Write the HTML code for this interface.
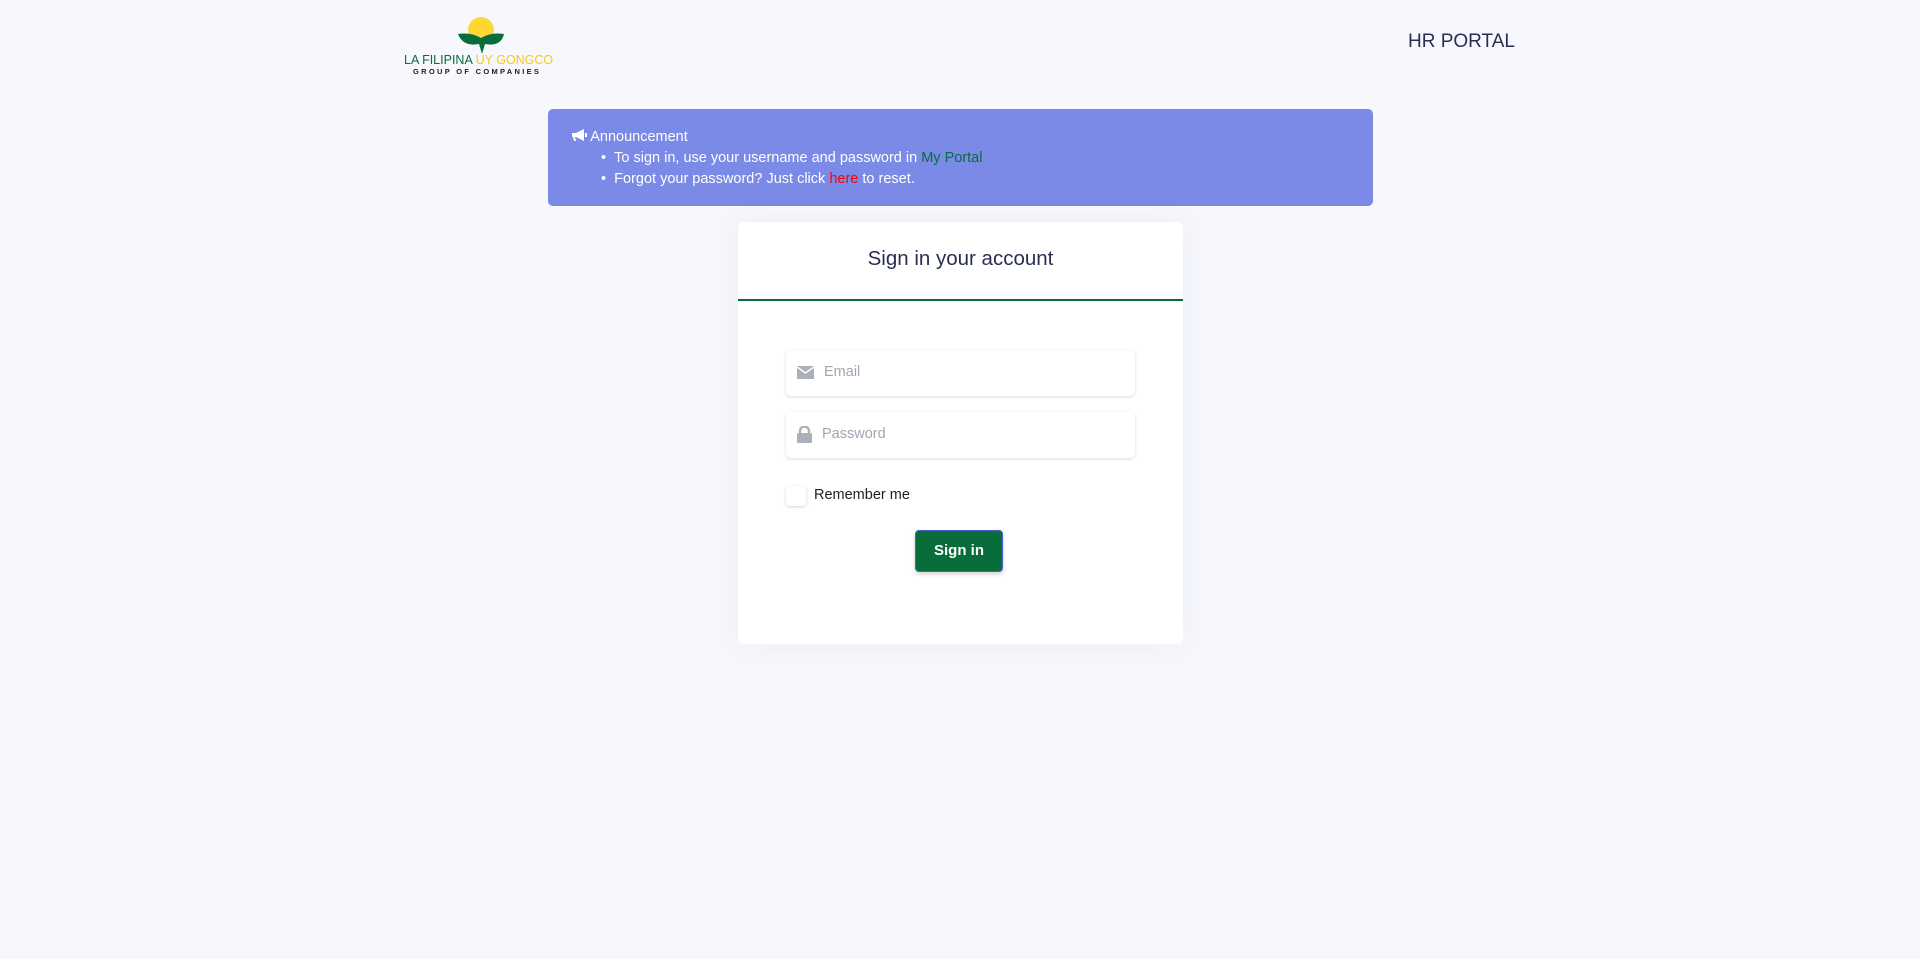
<!DOCTYPE html>
<html><head><meta charset="utf-8"><style>
*{box-sizing:border-box;margin:0;padding:0}
body{width:1920px;height:959px;background:#f7f8fd;font-family:"Liberation Sans",sans-serif;position:relative;overflow:hidden}
.abs{position:absolute}
</style></head><body>
<svg class="abs" style="left:455px;top:16px" width="55" height="40" viewBox="0 0 55 40">
<circle cx="26" cy="14" r="13" fill="#fdd835"/>
<path d="M3 18 Q16 16 26 22 Q36 16 49 18 Q46 31 30 28 L27 38 L24 28 Q8 31 3 18Z" fill="#086d3b"/>
</svg>
<div class="abs" style="left:404px;top:53px;font-size:12.5px;color:#086d3b;white-space:nowrap">LA FILIPINA <span style="color:#f6c915">UY GONGCO</span></div>
<div class="abs" style="left:413px;top:67px;font-size:7.5px;letter-spacing:2.3px;font-weight:bold;color:#222">GROUP OF COMPANIES</div>
<div class="abs" style="left:1408px;top:31px;font-size:19px;color:#2a2f52">HR PORTAL</div>
<div class="abs" style="left:548px;top:109px;width:825px;height:97px;background:#7a8ae6;border-radius:5px;color:#fff;font-size:14.5px;line-height:21px;padding:18px 0 0 24px">
<div><svg width="15" height="13" viewBox="0 0 15 13" style="vertical-align:-1px"><path d="M0 4 H4 L12 0 V12 L4 8 H3 L4 12 H2 L1 8 H0Z" fill="#fff"/><rect x="13" y="4" width="2" height="4" fill="#fff"/></svg> Announcement</div>
<div style="padding-left:29px">• &nbsp;To sign in, use your username and password in <b style="color:#086d3b;font-weight:normal">My Portal</b></div>
<div style="padding-left:29px">• &nbsp;Forgot your password? Just click <span style="color:#ff0000">here</span> to reset.</div>
</div>
<div class="abs" style="left:738px;top:222px;width:445px;height:422px;background:#fff;border-radius:5px;box-shadow:0 0 30px rgba(100,110,160,.08)">
<div style="height:79px;border-bottom:2px solid #086d3b;text-align:center;font-size:20.5px;color:#2a2f52;padding-top:25px">Sign in your account</div>
<div class="abs" style="left:48px;top:128px;width:349px;height:46px;border-radius:5px;box-shadow:0 1px 3px rgba(0,0,0,.15);font-size:14.5px;color:#a0a6b2;padding:14px 0 0 38px">Email
<svg class="abs" style="left:11px;top:16px" width="17" height="13" viewBox="0 0 17 13"><rect width="17" height="13" fill="#aab0ba"/><path d="M0 1 L8.5 7 L17 1" stroke="#fff" stroke-width="1.5" fill="none"/></svg></div>
<div class="abs" style="left:48px;top:190px;width:349px;height:46px;border-radius:5px;box-shadow:0 1px 3px rgba(0,0,0,.15);font-size:14.5px;color:#a0a6b2;padding:14px 0 0 36px">Password
<svg class="abs" style="left:11px;top:14px" width="15" height="17" viewBox="0 0 15 17"><path d="M3 8 V5 a4.5 4.5 0 0 1 9 0 V8" stroke="#aab0ba" stroke-width="2.4" fill="none"/><rect y="7" width="15" height="10" rx="1.5" fill="#aab0ba"/></svg></div>
<div class="abs" style="left:48px;top:264px;width:20px;height:20px;border-radius:4px;box-shadow:0 1px 3px rgba(0,0,0,.18)"></div>
<div class="abs" style="left:76px;top:265px;font-size:14.5px;color:#222">Remember me</div>
<div class="abs" style="left:177px;top:308px;width:88px;height:42px;background:#086d3b;border:1px solid #4b5fd0;border-radius:4px;color:#fff;font-weight:bold;font-size:15px;text-align:center;line-height:40px;box-shadow:0 2px 4px rgba(0,0,0,.2)">Sign in</div>
</div>
</body></html>
